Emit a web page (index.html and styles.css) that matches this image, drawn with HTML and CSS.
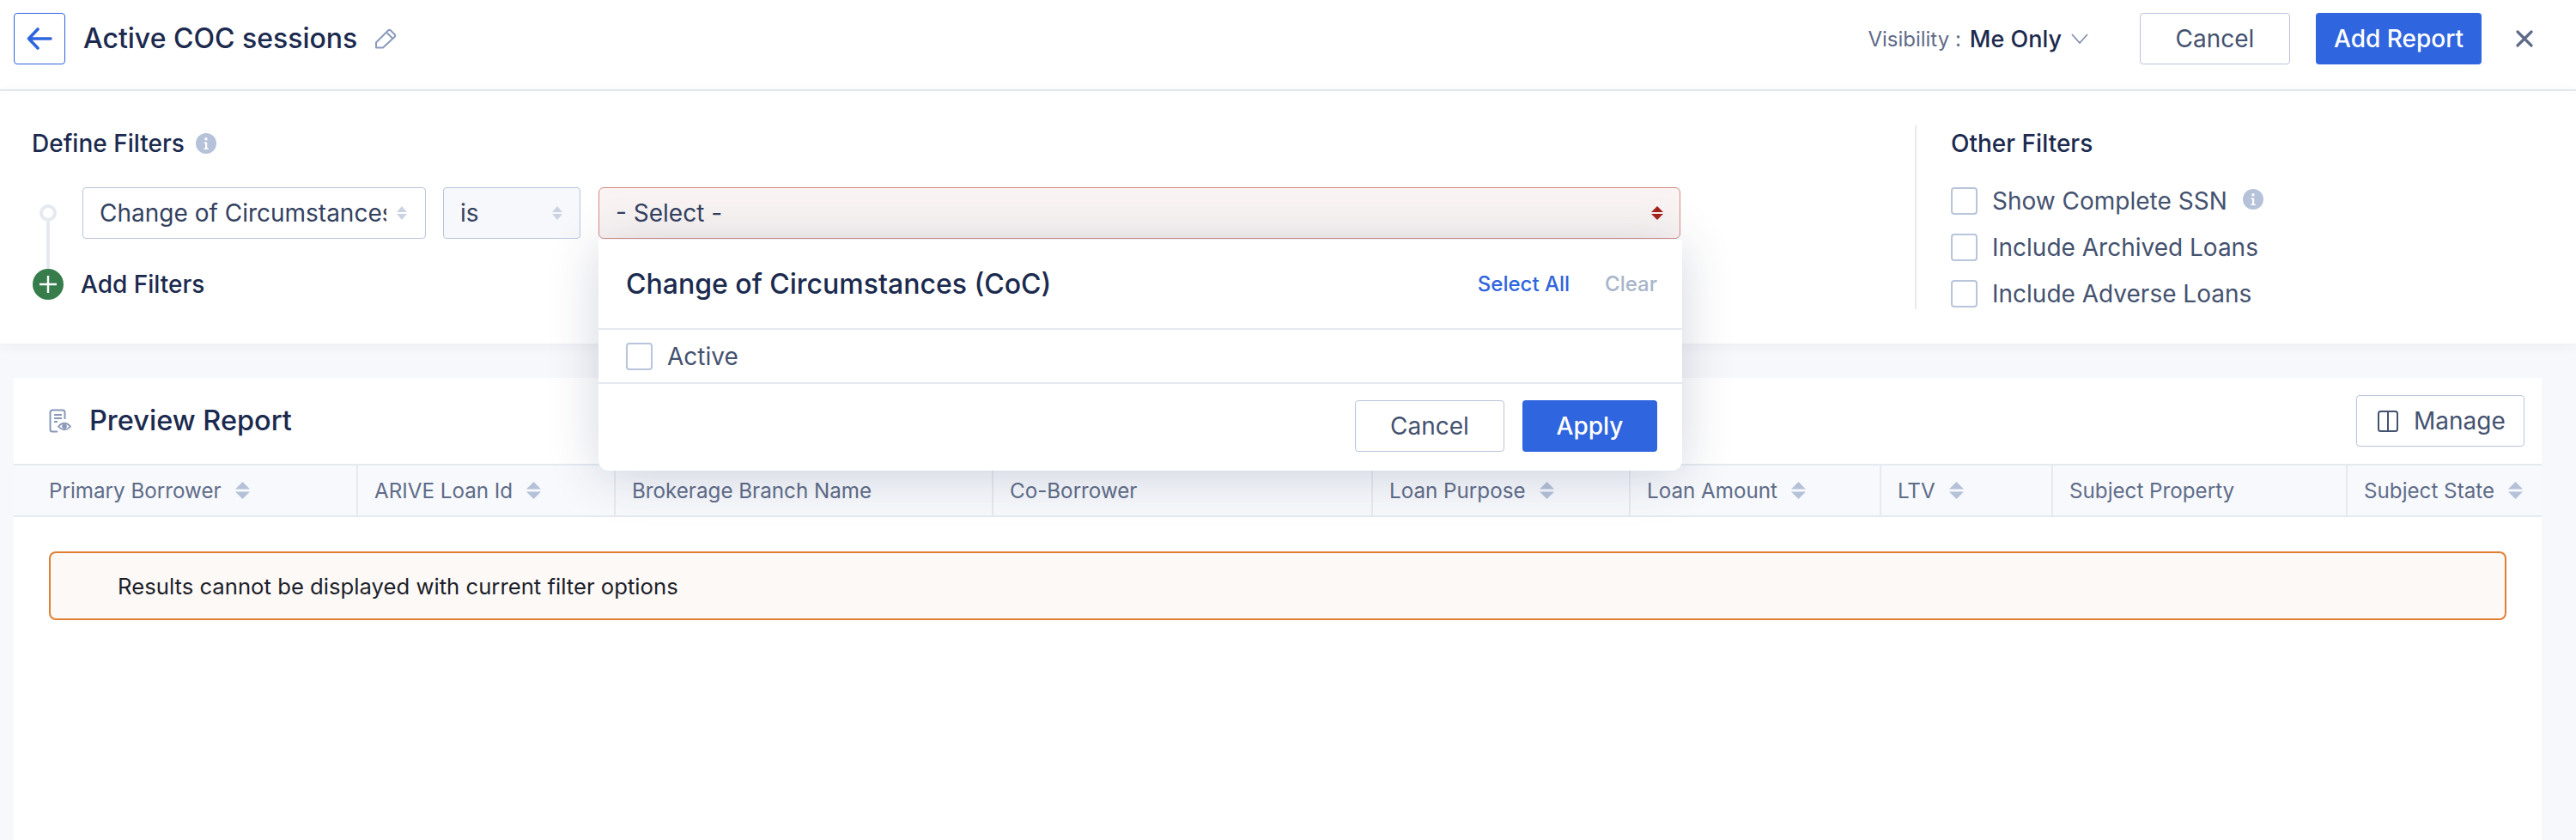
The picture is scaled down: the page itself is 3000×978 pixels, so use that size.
FILE: index.html
```html
<!DOCTYPE html>
<html lang="en">
<head>
<meta charset="utf-8">
<title>Active COC sessions</title>
<link rel="stylesheet" href="styles.css">
</head>
<body>
<svg class="defs" width="0" height="0" aria-hidden="true">
  <symbol id="sort" viewBox="0 0 17 20"><path d="M8.5 0 17 8.5H0Z" fill="#b4c1d8"/><path d="M8.5 20 0 11.5H17Z" fill="#b4c1d8"/></symbol>
  <symbol id="sort-soft" viewBox="0 0 12 16"><path d="M6 0 12 7H0Z" fill="#cbd3e3"/><path d="M6 16 0 9H12Z" fill="#cbd3e3"/></symbol>
  <symbol id="info" viewBox="0 0 24 24"><circle cx="12" cy="12" r="12" fill="#b5c2d9"/><circle cx="12" cy="6.8" r="1.7" fill="#fff"/><path d="M9.6 10.4h3.6v7h1.6v1.6H9.4v-1.6h1.6v-5.4H9.6Z" fill="#fff"/></symbol>
</svg>

<header class="topbar">
  <button class="back-btn" aria-label="Back">
    <svg width="30" height="26" viewBox="0 0 30 26"><path d="M28 13H3M13 2 2.5 13 13 24" fill="none" stroke="#2f65de" stroke-width="3.6" stroke-linecap="round" stroke-linejoin="round"/></svg>
  </button>
  <h1 class="page-title">Active COC sessions</h1>
  <svg class="pencil" width="26" height="24" viewBox="0 0 26 24"><path d="M2 22.500V16.500L16 2.500q1.500-1.500 3 0L23.500 7q1.500 1.500 0 3L10 22.500ZM14 4.500 21.500 12" fill="none" stroke="#8a9abc" stroke-width="2" stroke-linejoin="round"/></svg>
  <div class="topbar-right">
    <span class="vis-label">Visibility :</span>
    <span class="vis-value">Me Only</span>
    <svg class="vis-chevron" width="20" height="12" viewBox="0 0 20 12"><path d="M1 1 10 11 19 1" fill="none" stroke="#7d8aa8" stroke-width="1.600"/></svg>
    <button class="btn btn-outline btn-top-cancel">Cancel</button>
    <button class="btn btn-primary btn-add">Add Report</button>
    <svg class="close-x" width="20" height="20" viewBox="0 0 20 20"><path d="M2 2 18 18M18 2 2 18" stroke="#5f6c88" stroke-width="3.200" stroke-linecap="round"/></svg>
  </div>
</header>

<section class="filters">
  <div class="define">
    <div class="section-title">Define Filters <svg class="info" width="24" height="24"><use href="#info"/></svg></div>
    <div class="filter-grid">
      <div class="timeline"><span class="ring"></span><span class="stem"></span>
        <svg class="plus" width="36" height="36" viewBox="0 0 36 36"><circle cx="18" cy="18" r="18" fill="#367d4b"/><path d="M18 8v20M8 18h20" stroke="#fff" stroke-width="2.400"/></svg>
      </div>
      <div class="filter-row">
        <div class="select select-field"><span class="select-text">Change of Circumstances</span><svg width="12" height="16"><use href="#sort-soft"/></svg></div>
        <div class="select select-op"><span class="select-text">is</span><svg width="12" height="16"><use href="#sort-soft"/></svg></div>
        <div class="value-wrap">
          <div class="select select-value"><span class="select-text">- Select -</span>
            <svg width="14" height="16" viewBox="0 0 14 16"><path d="M7 0 14 7H0Z" fill="#a5231b"/><path d="M7 16 0 9H14Z" fill="#a5231b"/></svg>
          </div>
          <div class="dropdown">
            <div class="dd-head">
              <span class="dd-title">Change of Circumstances (CoC)</span>
              <span class="dd-link">Select All</span>
              <span class="dd-clear">Clear</span>
            </div>
            <label class="dd-option"><span class="check"></span>Active</label>
            <div class="dd-foot">
              <button class="btn btn-outline btn-dd-cancel">Cancel</button>
              <button class="btn btn-primary btn-apply">Apply</button>
            </div>
          </div>
        </div>
      </div>
      <div class="add-filters">Add Filters</div>
    </div>
  </div>
  <aside class="other">
    <div class="section-title">Other Filters</div>
    <div class="other-list">
      <label class="other-item"><span class="check"></span>Show Complete SSN <svg class="info info-ssn" width="24" height="24"><use href="#info"/></svg></label>
      <label class="other-item"><span class="check"></span>Include Archived Loans</label>
      <label class="other-item"><span class="check"></span>Include Adverse Loans</label>
    </div>
  </aside>
</section>

<main class="card">
  <div class="card-head">
    <svg class="report-icon" width="26" height="28" viewBox="0 0 26 28"><path d="M10 26.500H4a2.500 2.500 0 0 1-2.500-2.500V4A2.500 2.500 0 0 1 4 1.500h12A2.500 2.500 0 0 1 18.500 4v8" fill="none" stroke="#8898b8" stroke-width="2"/><path d="M6 7h9M6 11h9M6 15h4" stroke="#8898b8" stroke-width="2"/><path d="M11 20.500q7-7.500 14 0q-7 7.500-14 0Z" fill="#fff" stroke="#8898b8" stroke-width="1.800"/><circle cx="18" cy="20.500" r="2.800" fill="#8898b8"/></svg>
    <h2 class="card-title">Preview Report</h2>
    <button class="btn btn-outline btn-manage">
      <svg width="24" height="25" viewBox="0 0 24 25"><rect x="1" y="1" width="22" height="23" rx="2.500" fill="none" stroke="#44526f" stroke-width="2"/><path d="M12 1v23" stroke="#44526f" stroke-width="2"/></svg>
      Manage
    </button>
  </div>
  <div class="thead">
    <div class="th">Primary Borrower<svg width="17" height="20"><use href="#sort"/></svg></div>
    <div class="th">ARIVE Loan Id<svg width="17" height="20"><use href="#sort"/></svg></div>
    <div class="th">Brokerage Branch Name</div>
    <div class="th">Co-Borrower</div>
    <div class="th">Loan Purpose<svg width="17" height="20"><use href="#sort"/></svg></div>
    <div class="th">Loan Amount<svg width="17" height="20"><use href="#sort"/></svg></div>
    <div class="th">LTV<svg width="17" height="20"><use href="#sort"/></svg></div>
    <div class="th">Subject Property</div>
    <div class="th">Subject State<svg width="17" height="20"><use href="#sort"/></svg></div>
  </div>
  <div class="card-body">
    <div class="alert">Results cannot be displayed with current filter options</div>
  </div>
</main>
</body>
</html>
```

FILE: styles.css
```css
* { box-sizing: border-box; }
html, body { margin: 0; padding: 0; }
body {
  width: 3000px;
  height: 978px;
  overflow: hidden;
  background: #f7f8fb;
  font-family: Inter, "Liberation Sans", sans-serif;
  color: #1b2a4e;
  display: flex;
  flex-direction: column;
}
.defs { position: absolute; }
button { font-family: inherit; cursor: pointer; }

.topbar {
  height: 106px;
  flex: none;
  background: #fff;
  border-bottom: 2px solid #e5e9f0;
  display: flex;
  align-items: flex-start;
  padding: 15px 50px 0 16px;
}
.back-btn {
  width: 60px;
  height: 60px;
  background: #fff;
  border: 1.500px solid #2f65de;
  border-radius: 4px;
  padding: 0;
  display: flex;
  align-items: center;
  justify-content: center;
}
.page-title {
  margin: 0 0 0 21px;
  font-size: 32px;
  line-height: 60px;
  font-weight: 500;
}
.pencil { margin: 18px 0 0 20px; }
.topbar-right {
  margin-left: auto;
  display: flex;
  align-items: center;
  height: 60px;
}
.vis-label { font-size: 24px; color: #5f6c88; }
.vis-value { font-size: 27px; font-weight: 500; margin-left: 10px; }
.vis-chevron { margin-left: 11px; }
.btn {
  height: 60px;
  border-radius: 4px;
  font-size: 28px;
  padding: 0;
}
.btn-outline { background: #fff; border: 1.500px solid #b9c5da; color: #44526f; }
.btn-primary { background: #2f65de; border: 0; color: #fff; font-weight: 500; }
.btn-top-cancel { width: 175px; margin-left: 60px; }
.btn-add { width: 193px; margin-left: 30px; }
.close-x { margin-left: 40px; }

.filters {
  height: 294px;
  flex: none;
  background: #fff;
  box-shadow: 0 2px 14px rgba(40, 50, 90, .06);
  padding: 40px 0 40px 37px;
  display: flex;
}
.define { width: 2193px; flex: none; }
.section-title {
  height: 42px;
  display: flex;
  align-items: center;
  font-size: 28px;
  font-weight: 500;
}
.section-title .info { margin-left: 13px; }
.filter-grid {
  margin-top: 30px;
  display: grid;
  grid-template-columns: 37px 1fr;
  grid-template-rows: 95px 36px;
  column-gap: 22px;
}
.timeline {
  grid-row: 1 / 3;
  display: flex;
  flex-direction: column;
  align-items: center;
  padding: 20px 0 0 1px;
}
.ring { width: 20px; height: 20px; border: 4px solid #e5e9f0; border-radius: 50%; flex: none; }
.stem { width: 4px; flex: 1; background: #e5e9f0; }
.plus { flex: none; }
.filter-row { display: flex; align-items: flex-start; gap: 20px; }
.select {
  height: 60px;
  border: 1.500px solid #b9c5da;
  border-radius: 4px;
  display: flex;
  align-items: center;
  justify-content: space-between;
  font-size: 28px;
  color: #33415f;
}
.select-field { width: 400px; padding: 0 21px 0 19px; background: #fff; }
.select-field .select-text { width: 334px; overflow: hidden; white-space: nowrap; }
.select-op { width: 160px; padding: 0 20px 0 19px; background: #f7f8fb; }
.value-wrap { position: relative; width: 1262px; margin-left: 1px; }
.select-value {
  width: 1260px;
  padding: 0 19px;
  background: #f9f4f3;
  border-color: #d48a84;
  border-radius: 6px;
}
.dropdown {
  position: absolute;
  z-index: 5;
  top: 61px;
  left: 0;
  width: 1262px;
  height: 269px;
  background: #fff;
  border-radius: 0 0 12px 12px;
  box-shadow: 0 6px 60px rgba(40, 50, 90, .2);
  display: flex;
  flex-direction: column;
}
.dd-head {
  height: 105px;
  flex: none;
  border-bottom: 2px solid #e5e9f0;
  display: flex;
  align-items: center;
  padding: 0 29px 0 32px;
}
.dd-title { font-size: 32px; font-weight: 500; margin-right: auto; }
.dd-link { font-size: 24px; font-weight: 500; color: #2f65de; }
.dd-clear { font-size: 24px; font-weight: 500; color: #a9b5cb; margin-left: 41px; }
.dd-option {
  height: 63px;
  flex: none;
  border-bottom: 2px solid #e5e9f0;
  display: flex;
  align-items: center;
  padding-left: 32px;
  font-size: 28px;
  color: #44526f;
}
.check {
  width: 31px;
  height: 32px;
  flex: none;
  background: #fff;
  border: 2px solid #b9c5da;
  border-radius: 4px;
  margin-right: 17px;
}
.dd-foot {
  flex: 1;
  display: flex;
  justify-content: flex-end;
  align-items: flex-start;
  gap: 21px;
  padding: 19px 29px 0 0;
}
.btn-dd-cancel { width: 174px; }
.btn-apply { width: 157px; }
.add-filters {
  grid-column: 2;
  font-size: 28px;
  font-weight: 500;
  line-height: 36px;
  margin-left: -2px;
}

.other {
  flex: 1;
  border-left: 2px solid #e5e9f0;
  padding-left: 40px;
}
.other-list {
  margin-top: 30px;
  display: flex;
  flex-direction: column;
  gap: 22px;
}
.other-item {
  height: 32px;
  display: flex;
  align-items: center;
  font-size: 28px;
  color: #44526f;
}
.info-ssn { margin: -4px 0 0 18px; }

.card {
  flex: 1;
  width: 2944px;
  margin: 40px 0 0 16px;
  background: #fff;
  display: flex;
  flex-direction: column;
}
.card-head {
  height: 102px;
  flex: none;
  border-bottom: 2px solid #e5e9f0;
  display: flex;
  align-items: flex-start;
  padding: 20px 20px 0 41px;
}
.report-icon { margin-top: 16px; }
.card-title {
  margin: 0 0 0 21px;
  font-size: 32.500px;
  font-weight: 500;
  line-height: 60px;
}
.btn-manage {
  margin-left: auto;
  width: 196px;
  display: flex;
  align-items: center;
  gap: 18px;
  padding-left: 24px;
  font-size: 28px;
}
.thead {
  height: 60px;
  flex: none;
  background: #f7f9fc;
  border-bottom: 2px solid #e5e9f0;
  display: grid;
  grid-template-columns: 399px 300px 440px 442px 300px 292px 200px 343px 228px;
}
.th {
  display: flex;
  align-items: center;
  gap: 16px;
  padding-left: 19px;
  font-size: 24.200px;
  color: #5f6c88;
  white-space: nowrap;
  border-left: 2px solid #e5e9f0;
}
.th:first-child { padding-left: 41px; border-left: 0; }
.card-body { padding: 40px 41px; }
.alert {
  height: 80px;
  border: 2px solid #e07f32;
  border-radius: 8px;
  background: #fdf9f6;
  display: flex;
  align-items: center;
  padding-left: 78px;
  font-size: 25.700px;
  color: #1c1f2b;
}
```
